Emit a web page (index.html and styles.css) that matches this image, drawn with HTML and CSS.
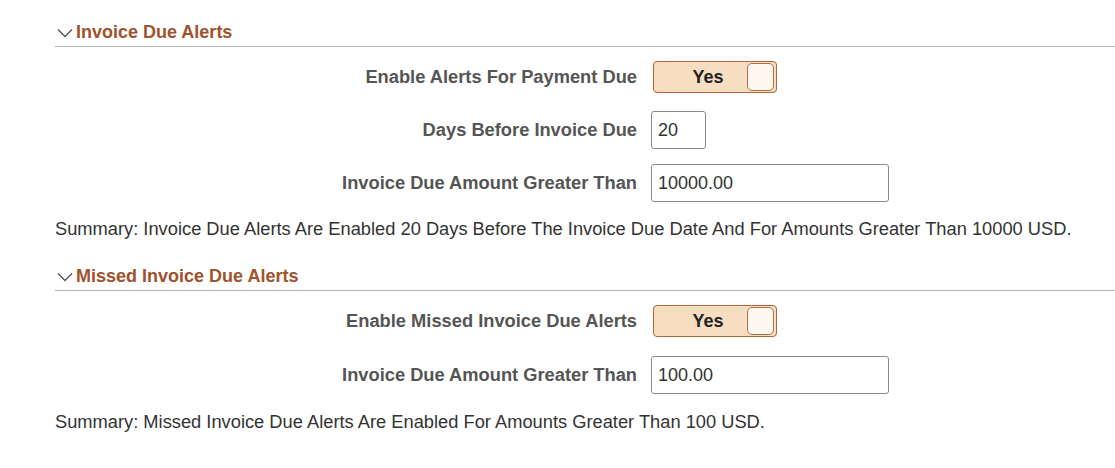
FILE: index.html
```html
<!DOCTYPE html>
<html>
<head>
<meta charset="utf-8">
<link rel="stylesheet" href="styles.css">
</head>
<body>
<div class="page">
  <section class="group">
    <h2 class="group-head">
      <svg class="chev" width="16" height="10" viewBox="0 0 16 10"><path d="M1 1.5 L8 8.5 L15 1.5" fill="none" stroke="#555" stroke-width="1.4"/></svg>
      <span>Invoice Due Alerts</span>
    </h2>
    <div class="form">
      <div class="label">Enable Alerts For Payment Due</div>
      <div class="ctrl"><div class="toggle"><span class="tog-text">Yes</span><span class="knob"></span></div></div>
      <div class="label">Days Before Invoice Due</div>
      <div class="ctrl"><input class="field small" type="text" value="20"></div>
      <div class="label">Invoice Due Amount Greater Than</div>
      <div class="ctrl"><input class="field wide" type="text" value="10000.00"></div>
    </div>
    <p class="summary">Summary: Invoice Due Alerts Are Enabled 20 Days Before The Invoice Due Date And For Amounts Greater Than 10000 USD.</p>
  </section>
  <section class="group second">
    <h2 class="group-head">
      <svg class="chev" width="16" height="10" viewBox="0 0 16 10"><path d="M1 1.5 L8 8.5 L15 1.5" fill="none" stroke="#555" stroke-width="1.4"/></svg>
      <span>Missed Invoice Due Alerts</span>
    </h2>
    <div class="form form-missed">
      <div class="label">Enable Missed Invoice Due Alerts</div>
      <div class="ctrl"><div class="toggle"><span class="tog-text">Yes</span><span class="knob"></span></div></div>
      <div class="label">Invoice Due Amount Greater Than</div>
      <div class="ctrl"><input class="field wide" type="text" value="100.00"></div>
    </div>
    <p class="summary summary-missed">Summary: Missed Invoice Due Alerts Are Enabled For Amounts Greater Than 100 USD.</p>
  </section>
</div>
</body>
</html>
```
FILE: styles.css
```css
* { box-sizing: border-box; }
html, body { margin: 0; padding: 0; background: #fff; }
body { font-family: "Liberation Sans", Arial, sans-serif; font-size: 18.3px; color: #333; }
.page { padding: 20px 0 0 55px; }
.group-head {
  margin: 0;
  display: flex;
  align-items: center;
  font-size: 18px;
  font-weight: bold;
  color: #a0522d;
  line-height: 24px;
  padding-bottom: 2px;
  border-bottom: 1px solid #b4b4b4;
}
.chev { margin: 2px 3px 0 2px; }
.form {
  display: grid;
  grid-template-columns: 582px 1fr;
  column-gap: 14px;
  row-gap: 15px;
  margin-top: 11px;
}
.form-missed { row-gap: 16px; }
.label {
  text-align: right;
  font-weight: bold;
  color: #555;
  display: flex;
  align-items: center;
  justify-content: flex-end;
  height: 38px;
}
.ctrl { display: flex; align-items: center; height: 38px; }
.toggle {
  margin-left: 2px;
  width: 124px;
  height: 32px;
  background: #f7dec0;
  border: 1px solid #b2673b;
  border-radius: 4px;
  display: flex;
  align-items: center;
  position: relative;
}
.tog-text { width: 108px; text-align: center; font-weight: bold; color: #222; font-size: 18px; }
.knob {
  position: absolute;
  right: 2px;
  top: 1px;
  width: 27px;
  height: 28px;
  background: #fff8f1;
  border: 1px solid #b2704a;
  border-radius: 5px;
}
.field {
  height: 38px;
  border: 1px solid #8a8a8a;
  border-radius: 3px;
  font-family: "Liberation Sans", Arial, sans-serif;
  font-size: 18px;
  color: #333;
  padding: 0 6px;
  background: #fff;
  outline: none;
}
.small { width: 55px; }
.wide { width: 238px; }
.summary { margin: 17px 0 0; line-height: 20px; color: #333; }
.summary-missed { margin-top: 18px; }
.second { margin-top: 25px; }
```
